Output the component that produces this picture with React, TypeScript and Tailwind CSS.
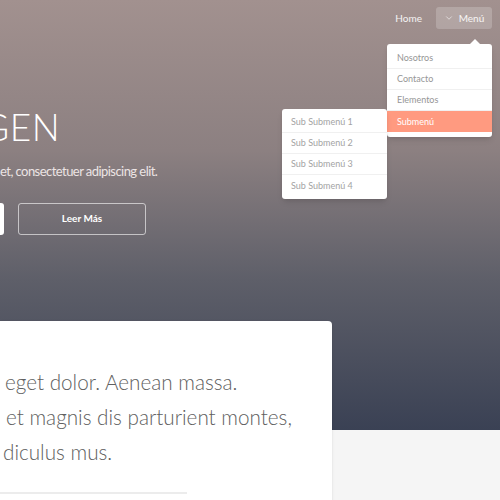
import { ChevronDown } from "lucide-react"

const menuItems = ["Nosotros", "Contacto", "Elementos"]
const subItems = ["Sub Submenú 1", "Sub Submenú 2", "Sub Submenú 3", "Sub Submenú 4"]

function Nav() {
  return (
    <nav className="flex justify-end items-center gap-[14px] pt-[7px] pr-[8px] text-[10px] text-white">
      <a className="text-white/90">Home</a>
      <div className="relative">
        <button className="flex items-center gap-[5px] h-[22px] w-[56px] justify-center rounded-[3px] bg-white/20 text-white/90">
          <ChevronDown className="h-[10px] w-[10px]" strokeWidth={1.5} />
          <span>Menú</span>
        </button>
        <div className="absolute top-[37px] right-0 w-[105px] bg-white rounded-[3px] shadow-md">
          <div className="absolute -top-[5px] right-[12px] w-0 h-0 border-x-[5px] border-x-transparent border-b-[5px] border-b-white" />
          <ul className="pt-[4px] pb-[5px]">
            {menuItems.map((item) => (
              <li key={item} className="h-[21px] flex items-center px-[10px] text-[9px] text-[#969696] border-b border-[#f0f0f0]">
                {item}
              </li>
            ))}
            <li className="relative h-[21px] flex items-center px-[10px] text-[9px] text-white bg-[#ff9a80]">
              Submenú
              <ul className="absolute right-full top-[-2px] w-[105px] bg-white rounded-[3px] shadow-md py-[3px]">
                {subItems.map((item, i) => (
                  <li
                    key={item}
                    className={`h-[21px] flex items-center px-[9px] text-[9px] text-[#a3a3a3] ${i < 3 ? "border-b border-[#f0f0f0]" : ""}`}
                  >
                    {item}
                  </li>
                ))}
              </ul>
            </li>
          </ul>
        </div>
      </div>
    </nav>
  )
}

export default function App() {
  return (
    <div className="w-[500px] h-[500px] overflow-hidden bg-[#f5f5f5] font-['Lato','Open_Sans',sans-serif]">
      <header className="h-[430px] bg-[linear-gradient(180deg,#a2918f_0%,#8c8081_35%,#5e5f69_65%,#3a4154_100%)]">
        <Nav />
        <div className="mt-[79px]">
          <h1 className="-ml-[18px] text-[37px] font-light text-white leading-none tracking-[0.5px] whitespace-nowrap">GEN</h1>
          <p className="mt-[17px] text-[13px] text-[#ece4e4] whitespace-nowrap tracking-[-0.55px]">
            et, consectetuer adipiscing elit.
          </p>
          <div className="flex gap-[14px] -ml-[124px] mt-[21px]">
            <a className="w-[128px] h-[32px] rounded-[3px] bg-white" />
            <a className="w-[128px] h-[32px] rounded-[3px] border border-white/60 flex items-center justify-center text-[10px] font-bold text-white">
              Leer Más
            </a>
          </div>
        </div>
      </header>
      <section className="-mt-[109px] w-[332px] h-[200px] bg-white rounded-tr-[4px] shadow-sm">
        <div className="pt-[44px] text-[20.7px] font-light leading-[35px] text-[#606060] whitespace-nowrap">
          <p className="pl-[5px]">eget dolor. Aenean massa.</p>
          <p className="pl-[6px]">et magnis dis parturient montes,</p>
          <p className="pl-[3px]">diculus mus.</p>
        </div>
        <div className="mt-[22px] w-[187px] h-[2px] bg-[#ececec]" />
      </section>
    </div>
  )
}
